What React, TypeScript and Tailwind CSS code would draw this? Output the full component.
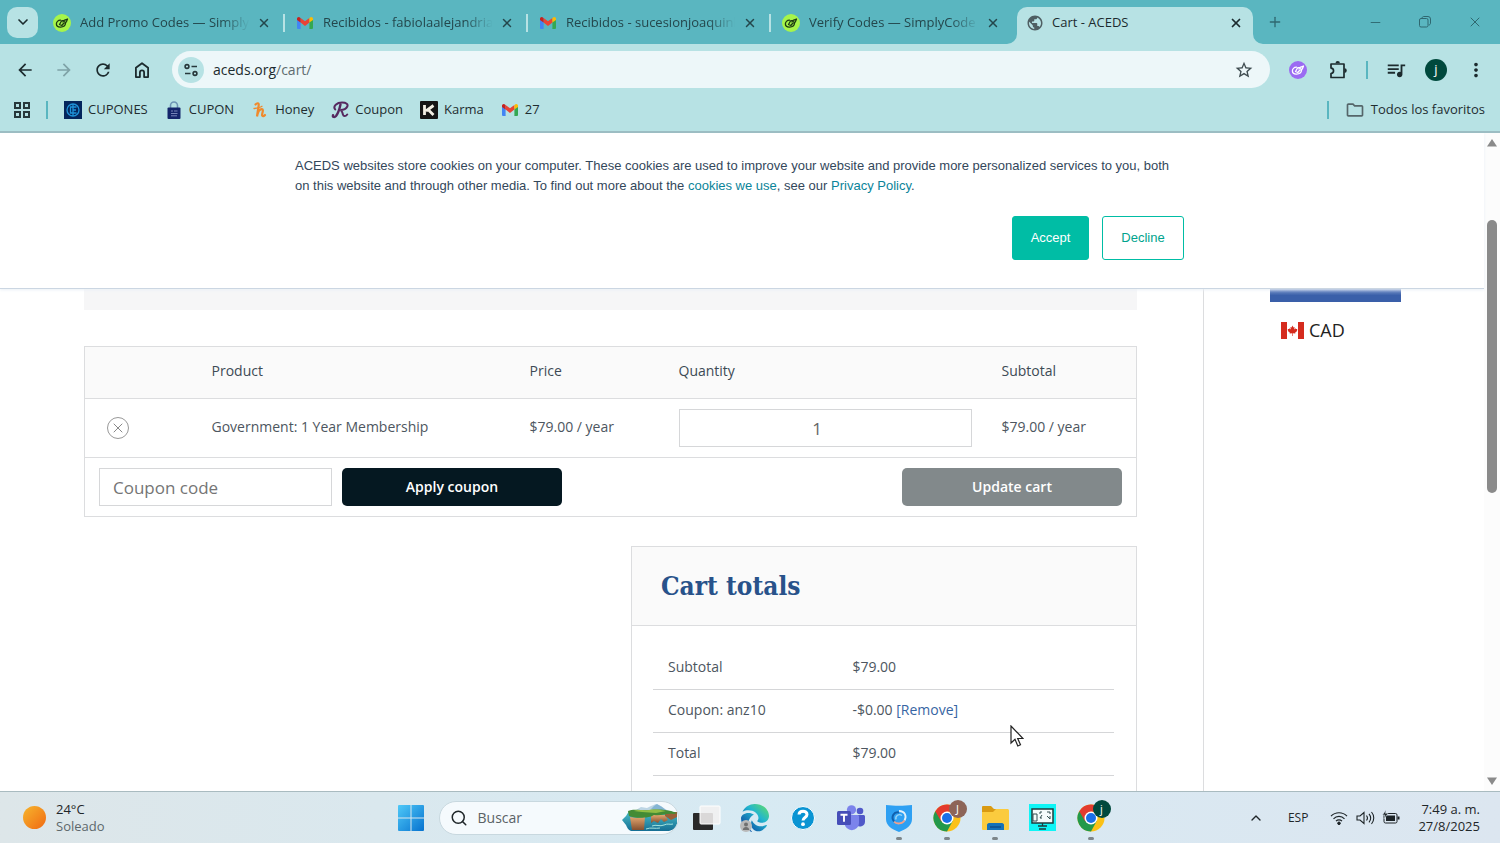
import { useState } from "react";
import type { ReactNode } from "react";
import { ChevronDown, ChevronUp, Minus, Plus, Search, X } from "lucide-react";
import {
  MdArrowBack,
  MdArrowForward,
  MdMoreVert,
  MdOutlineFolder,
  MdPublic,
  MdQueueMusic,
  MdRefresh,
  MdStarBorder,
} from "react-icons/md";
import { FaEdge } from "react-icons/fa6";

/* ---------- Icons ---------- */

function SimplyCodesIcon({ purple = false }: { purple?: boolean }) {
  return (
    <svg viewBox="0 0 18 18" className="w-[18px] h-[18px] shrink-0">
      <circle cx="9" cy="9" r="9" fill={purple ? "#9b6bf2" : "#a6f54a"} />
      <g
        fill="none"
        stroke={purple ? "#fff" : "#1d3a12"}
        strokeWidth="1.3"
        strokeLinecap="round"
        strokeLinejoin="round"
      >
        <path d="M7.500 6.200C5 6.200 3.300 8 3.400 10c.1 2.200 2 3.200 4.200 3.100 2.600-.1 4.800-1.800 5-4.100" />
        <path d="M6.500 10.500l2-3.500 2.500-.7L14.500 5l-1.200 3-2.800 1.500-1.700 2-1.200-.5z" />
        <path d="M10 8l2-1" />
      </g>
    </svg>
  );
}

function GmailIcon() {
  return (
    <svg viewBox="0 0 16 12" className="w-4 h-3 shrink-0">
      <path d="M0 2v9a1 1 0 0 0 1 1h2.600V4.500z" fill="#4285f4" />
      <path d="M16 2v9a1 1 0 0 1-1 1h-2.600V4.500z" fill="#34a853" />
      <path d="M3.600 5.600V1L8 4.300 12.400 1v4.600L8 8.900z" fill="#ea4335" />
      <path d="M0 1.800v1.100l3.600 2.700V1L2.700.4C1.600-.4 0 .4 0 1.800z" fill="#c5221f" />
      <path d="M16 1.800v1.100l-3.600 2.700V1l.9-.6c1.100-.8 2.700 0 2.700 1.400z" fill="#fbbc04" />
    </svg>
  );
}

function HomeIcon() {
  return (
    <svg viewBox="0 0 18 18" className="w-[18px] h-[18px]" fill="none" stroke="currentColor" strokeWidth="1.800">
      <path d="M2.900 16.100V6.800L9 2.200l6.100 4.600v9.300h-4v-4.600a2.100 2.100 0 0 0-4.200 0v4.600z" strokeLinejoin="round" />
    </svg>
  );
}

function PuzzleIcon() {
  return (
    <svg viewBox="0 0 20 20" className="w-5 h-5">
      <path
        d="M3 4h13v13.500H3v-4c3.400-.4 3.400-5 0-5.400z"
        fill="none"
        stroke="currentColor"
        strokeWidth="1.700"
        strokeLinejoin="round"
      />
      <path d="M7.500 3.300a2.200 2.200 0 0 1 4.400 0zM16.500 8.300a2.300 2.300 0 0 1 0 4.600z" fill="currentColor" />
    </svg>
  );
}

function SiteInfoIcon() {
  return (
    <svg viewBox="0 0 16 16" className="w-4 h-4" fill="none" stroke="#27383b" strokeWidth="1.600">
      <circle cx="4" cy="4.500" r="1.900" />
      <path d="M8.500 4.500H14M2 11.500h5.500" />
      <circle cx="12" cy="11.500" r="1.900" />
    </svg>
  );
}

function AppsIcon() {
  return (
    <svg viewBox="0 0 18 18" className="w-[18px] h-[18px]" fill="none" stroke="#27383b" strokeWidth="2">
      <rect x="2" y="2" width="5" height="5" />
      <rect x="11" y="2" width="5" height="5" />
      <rect x="2" y="11" width="5" height="5" />
      <rect x="11" y="11" width="5" height="5" />
    </svg>
  );
}

function CuponesIcon() {
  return (
    <svg viewBox="0 0 18 18" className="w-[18px] h-[18px]" fill="none">
      <rect width="18" height="18" fill="#04265c" />
      <circle cx="9" cy="9" r="6" stroke="#1f93d8" strokeWidth="1.300" />
      <path d="M9 3v12M9 6H6.500v6H9M9 6h3.500M9 9h3M9 12h3.500" stroke="#1f93d8" strokeWidth="1.300" />
    </svg>
  );
}

function LockIcon() {
  return (
    <svg viewBox="0 0 18 18" className="w-[18px] h-[18px]" fill="none">
      <path d="M5.500 7V4.500a3.500 3.500 0 0 1 7 0V7" stroke="#6d94b4" strokeWidth="1.600" />
      <rect x="2.500" y="6.500" width="13" height="11.500" rx="1" fill="#14256b" />
      <path d="M6 10h2M9 10h3.500M6 12.500h6.500M6 14.800h6" stroke="#7684b8" />
    </svg>
  );
}

function HoneyIcon() {
  return (
    <svg viewBox="0 0 18 18" className="w-[18px] h-[18px]" fill="none" stroke="#f08a2c" strokeLinecap="round">
      <path
        d="M4.500 3.500C6 1.700 8 1.800 7.700 4c-.3 3-1 6-1.700 11.500C7 10.500 9 8 11 8.200c2.200.3-.4 4.800.1 6.300.4 1.200 1.900.8 2.900-.5"
        strokeWidth="2.200"
      />
      <path d="M3 7.500c2.500-.3 6-.8 8-2.200" strokeWidth="1.300" />
    </svg>
  );
}

function CouponIcon() {
  return (
    <svg viewBox="0 0 18 18" className="w-[18px] h-[18px]" fill="none" stroke="#56285f" strokeLinecap="round">
      <path d="M9.500 3.500C8.500 8 7.500 12 5 15c-1.500 1.700-3.500 1-3-.8" strokeWidth="2.400" />
      <path
        d="M4.200 8.500C1.500 5 6 1.500 11 1.500c4.500 0 6.300 1.800 5.300 4-1 2.200-4.300 3.500-7 3.500 2 .5 2 2.500 2.600 4.500.6 2 2.600 2.300 4.300 0"
        strokeWidth="2"
      />
    </svg>
  );
}

function KarmaIcon() {
  return (
    <svg viewBox="0 0 18 18" className="w-[18px] h-[18px]">
      <rect width="18" height="18" rx="1" fill="#151515" />
      <path d="M4.500 4v10M13.500 4.500L6 10M8 8.500l5.500 5.500" stroke="#f3efe4" strokeWidth="2.800" fill="none" />
    </svg>
  );
}

function RestoreIcon() {
  return (
    <svg viewBox="0 0 12 12" className="w-3 h-3" fill="none" stroke="currentColor">
      <rect x=".5" y="2.500" width="8.500" height="8.500" rx="1.500" />
      <path d="M3 2.300C3 1.200 3.800.5 4.800.5H9A2.500 2.500 0 0 1 11.500 3v4.200c0 1-.7 1.800-1.800 1.800" />
    </svg>
  );
}

function CanadaFlag() {
  return (
    <svg viewBox="0 0 23 17" className="w-[23px] h-[17px]">
      <rect width="23" height="17" fill="#fff" />
      <path d="M0 0h6v17H0zM17 0h6v17h-6z" fill="#d52b1e" />
      <path
        d="M11.500 3.500l-1 1.900-1.100-.5.400 2.500-1.400-1.200-.3.900-1.500-.2.600 1.500-.6.400 2.300 1.900-.3.900 2.600-.4v2.800h.6v-2.800l2.600.4-.3-.9 2.300-1.900-.6-.4.600-1.500-1.500.2-.3-.9-1.400 1.200.4-2.500-1.100.5z"
        fill="#d52b1e"
      />
    </svg>
  );
}

function WindowsIcon() {
  return (
    <svg viewBox="0 0 26 26" className="w-[26px] h-[26px]">
      <defs>
        <linearGradient id="win" x1="0" y1="0" x2="1" y2="1" gradientUnits="objectBoundingBox">
          <stop offset="0" stopColor="#4fc9f8" />
          <stop offset="1" stopColor="#0672cf" />
        </linearGradient>
      </defs>
      <path d="M1 0h11.500v12.500H0V1a1 1 0 0 1 1-1zM13.500 0H25a1 1 0 0 1 1 1v11.500H13.500zM0 13.500h12.500V26H1a1 1 0 0 1-1-1zM13.500 13.500H26V25a1 1 0 0 1-1 1H13.500z" fill="url(#win)" />
    </svg>
  );
}

function SearchArt() {
  return (
    <svg viewBox="0 0 56 28" className="w-14 h-7">
      <defs>
        <linearGradient id="cliff" x1="0" y1="0" x2="0" y2="1">
          <stop offset="0" stopColor="#e2a66f" />
          <stop offset="1" stopColor="#84502f" />
        </linearGradient>
        <linearGradient id="sea" x1="0" y1="0" x2="0" y2="1">
          <stop offset="0" stopColor="#4bc0c9" />
          <stop offset="1" stopColor="#156e94" />
        </linearGradient>
      </defs>
      <path d="M14 6l5-3 6 1 4-2 5-2 5 2 4 3 4 2-14 2z" fill="#bdd5e4" />
      <path d="M29 5l3-3 3-2 5 3 4 3z" fill="#84b5d3" />
      <path d="M0 16l4-4 3-5h42l6 4v9c-1 4-4 6-8 7H9c-3-1-4-4-5-6z" fill="url(#sea)" />
      <path d="M8 13c4 1 11 1 15 0l-1 13H10z" fill="url(#cliff)" />
      <path d="M29 11h14l3 5-4 2-3-3-3 4-4-2-3 2z" fill="url(#cliff)" />
      <path d="M43 8h12v5l-6 3-6-4z" fill="#9a6038" />
      <path d="M6 7c6-3 14 0 22-1s17 0 21 1l6 2-3 1c-8-1-12 2-20 1-4 3-18 4-25 1z" fill="#448b35" />
      <path d="M12 7c5-2 9 0 15-1s12 0 17 1l-10 2-14-1z" fill="#92be45" />
      <path d="M30 22c4-2 8 1 12-1s6 0 9-1M24 25c5-2 9 0 14-1" stroke="#a4e2dd" fill="none" />
    </svg>
  );
}

function TaskViewIcon() {
  return (
    <svg viewBox="0 0 28 26" className="w-7 h-[26px]">
      <rect x="0" y="8" width="20" height="17" rx="1" fill="#292929" />
      <rect x="7" y="1" width="20" height="18" rx="1" fill="#f2f0f0" fillOpacity=".88" stroke="#fff" />
    </svg>
  );
}

function EdgeIcon() {
  return (
    <span className="relative">
      <svg className="absolute w-0 h-0" aria-hidden="true">
        <defs>
          <linearGradient id="edge" x1="0.900" y1="0.100" x2="0.200" y2="0.900">
            <stop offset="0" stopColor="#55d67c" />
            <stop offset=".4" stopColor="#22b5cf" />
            <stop offset="1" stopColor="#0c4fa4" />
          </linearGradient>
        </defs>
      </svg>
      <FaEdge className="w-7 h-7" fill="url(#edge)" />
      <svg viewBox="0 0 12 12" className="absolute -left-px bottom-0 w-3 h-3">
        <circle cx="6" cy="6" r="6" fill="#b9b9b9" />
        <circle cx="6" cy="4.500" r="2" fill="#707070" />
        <path d="M2.800 10c0-4 6.400-4 6.400 0z" fill="#707070" />
      </svg>
    </span>
  );
}

function HelpIcon() {
  return (
    <svg viewBox="0 0 24 24" className="w-6 h-6" fill="none">
      <circle cx="12" cy="12" r="11.500" fill="#0a94d3" stroke="#fff" />
      <path d="M8 8.500C8.200 4 16 4 16 8.500c0 3-4 3-4 6" stroke="#fff" strokeWidth="3" />
      <circle cx="12" cy="18.200" r="1.900" fill="#fff" />
    </svg>
  );
}

function TeamsIcon() {
  return (
    <svg viewBox="0 0 28 26" className="w-7 h-[26px]">
      <circle cx="23" cy="6" r="3.300" fill="#5059c9" />
      <path d="M18 10h8.500c.8 0 1.500.7 1.500 1.500v5a5 5 0 0 1-9 3z" fill="#5059c9" />
      <circle cx="14.500" cy="4.800" r="4.600" fill="#7b83eb" />
      <path d="M8 10h12.500c.8 0 1.500.7 1.500 1.500V18a7.200 7.200 0 0 1-14.400 0z" fill="#7b83eb" />
      <rect x="0" y="6" width="14" height="14" rx="1.500" fill="#464eb8" />
      <path d="M3.500 9.800h7M7 9.800v7" stroke="#fff" strokeWidth="1.900" />
    </svg>
  );
}

function ShieldIcon() {
  return (
    <svg viewBox="0 0 26 28" className="w-[26px] h-7" fill="none">
      <path d="M0 1c8 1 18 1 26 0v14c0 6-5 10-13 13C5 25 0 21 0 15z" fill="#2ea0f3" />
      <path d="M13 7c6 0 8 5 5.500 9.500" stroke="#e3f1fa" strokeWidth="1.800" />
      <path d="M18.500 16.500c-2 3.500-8 4-10.500 1" stroke="#f0a08c" strokeWidth="1.800" />
      <path d="M8 17.500C4.500 13 8 7.200 13 8.500" stroke="#1160ae" strokeWidth="2" />
      <path d="M10 15.500c-1-4 3-6 6-4" stroke="#9fd6f5" strokeWidth="1.400" />
    </svg>
  );
}

function ChromeIcon({ letter, badge }: { letter: string; badge: string }) {
  return (
    <span className="relative">
      <svg viewBox="0 0 28 28" className="w-7 h-7">
        <circle cx="14" cy="14" r="13.500" fill="#fbc116" />
        <path d="M14 14L2.300 7.200A13.500 13.500 0 0 0 14 27.500l5.600-10.200z" fill="#23994b" />
        <path d="M14 14v-6.300h11.900A13.500 13.500 0 0 0 2.300 7.200l5.900 10.200z" fill="#e33b2e" />
        <circle cx="14" cy="14" r="6.500" fill="#fff" />
        <circle cx="14" cy="14" r="5" fill="#1a6fe8" />
      </svg>
      <span
        className={`absolute -top-1 -right-1.5 flex h-[18px] w-[18px] items-center justify-center rounded-full text-[11px] leading-none text-white ${badge}`}
      >
        {letter}
      </span>
    </span>
  );
}

function ExplorerIcon() {
  return (
    <svg viewBox="0 0 28 26" className="w-7 h-[26px]">
      <path d="M1 2a1 1 0 0 1 1-1h8l3 3h13v5H1z" fill="#d99a12" />
      <path d="M1 7h11l3-3h11.500c.8 0 1.500.7 1.500 1.500V24a1 1 0 0 1-1 1H2a1 1 0 0 1-1-1z" fill="#fbcb3e" />
      <path d="M6 25v-5c0-1 .8-2 2-2h13c1.200 0 2 1 2 2v5z" fill="#1672b8" />
      <path d="M9 22h11" stroke="#0f4f8c" strokeWidth="1.500" />
    </svg>
  );
}

function CaptureIcon() {
  return (
    <svg viewBox="0 0 27 27" className="w-[27px] h-[27px]" fill="none">
      <rect width="27" height="27" fill="#0ff5f6" />
      <rect x="3" y="5" width="21" height="14" fill="#f5fbfb" stroke="#1f3b3d" strokeWidth="1.500" />
      <path d="M4 10h4v7H4zM11 8h2M11 8v2M13 11l-2 3M11 14h2M18 8h3M21 8v2M18 12l3 3M21 12v3" stroke="#334e50" />
      <path d="M13.500 19v3M9 22h9M10 25h7" stroke="#1f3b3d" strokeWidth="1.300" />
    </svg>
  );
}

function TrayIcons() {
  return (
    <svg viewBox="0 0 70 18" className="h-[18px] w-[70px]" fill="none" stroke="#1c2326">
      <path d="M1 7.200a11 11 0 0 1 16 0M3.500 9.800a7.600 7.600 0 0 1 11 0M6 12.200a4.200 4.200 0 0 1 6 0" strokeWidth="1.200" />
      <circle cx="9" cy="14.300" r="1.300" fill="#1c2326" />
      <path d="M27 7h3l4-3.500v11L30 11h-3zM36.500 6.500c1.200 1.500 1.200 3.500 0 5M39 4.800c2 2.500 2 6 0 8.500M41.500 3c3 3.500 3 8.500 0 12" strokeWidth="1.100" />
      <rect x="54" y="4.500" width="13" height="9.500" rx="1.500" />
      <rect x="56" y="6.500" width="9" height="5.500" fill="#1c2326" stroke="none" />
      <path d="M68.500 7.500v3" strokeWidth="2" />
      <path d="M56 1l-3.500 5H55l-1 4 4-5.500h-2.500z" fill="#1c2326" stroke="#dce9f1" strokeWidth=".5" />
    </svg>
  );
}

/* ---------- Browser ---------- */

const tabs = [
  { id: 1, title: "Add Promo Codes — Simply", icon: <SimplyCodesIcon /> },
  { id: 2, title: "Recibidos - fabiolaalejandria", icon: <GmailIcon /> },
  { id: 3, title: "Recibidos - sucesionjoaquinl", icon: <GmailIcon /> },
  { id: 4, title: "Verify Codes — SimplyCode", icon: <SimplyCodesIcon /> },
];

const bookmarks = [
  { name: "CUPONES", icon: <CuponesIcon /> },
  { name: "CUPON", icon: <LockIcon /> },
  { name: "Honey", icon: <HoneyIcon /> },
  { name: "Coupon", icon: <CouponIcon /> },
  { name: "Karma", icon: <KarmaIcon /> },
  { name: "27", icon: <GmailIcon /> },
];

function TabStrip() {
  return (
    <div className="flex h-11 shrink-0 items-center bg-[#5ab6c0] pl-[7px]">
      <button aria-label="Buscar pestañas" className="mr-1 flex h-[31px] w-[31px] items-center justify-center rounded-[10px] bg-[#b7e2e4]">
        <ChevronDown className="h-4 w-4 text-[#1c2b2e]" strokeWidth={2.5} />
      </button>
      {tabs.map((tab) => (
        <div key={tab.id} className="flex w-[243px] items-center pt-0.5 pl-[11px] text-[#24474c]">
          <span className="flex w-[18px] shrink-0 justify-center">{tab.icon}</span>
          <span className="ml-[9px] min-w-0 flex-1 overflow-hidden whitespace-nowrap [mask-image:linear-gradient(to_right,black_82%,transparent_98%)]">
            {tab.title}
          </span>
          <button aria-label="Cerrar pestaña" className="mr-3 ml-1">
            <X className="h-[14px] w-[14px]" strokeWidth={2.5} />
          </button>
          <span className={`h-[18px] w-0.5 ${tab.id === 4 ? "" : "bg-[#b7e2e4]"}`} />
        </div>
      ))}
      <div className="relative ml-[3px] mt-[7px] flex h-[37px] w-[236px] items-center rounded-t-[10px] bg-[#b7e2e4] pb-1.5 pl-[9px] text-[#1c2b2e]">
        <svg viewBox="0 0 10 10" className="absolute bottom-0 -left-2.5 h-2.5 w-2.5">
          <path d="M10 0v10H0A10 10 0 0 0 10 0z" fill="#b7e2e4" />
        </svg>
        <svg viewBox="0 0 10 10" className="absolute -right-2.5 bottom-0 h-2.5 w-2.5">
          <path d="M0 0v10h10A10 10 0 0 1 0 0z" fill="#b7e2e4" />
        </svg>
        <MdPublic className="h-[18px] w-[18px] text-[#4f5f63]" />
        <span className="ml-2 flex-1">Cart - ACEDS</span>
        <button aria-label="Cerrar pestaña" className="mr-[10px]">
          <X className="h-[14px] w-[14px]" strokeWidth={3} />
        </button>
      </div>
      <button aria-label="Nueva pestaña" className="ml-[14px] text-[#2f6870]">
        <Plus className="h-4 w-4" />
      </button>
      <div className="ml-auto flex text-[#2f6870]">
        <button aria-label="Minimizar" className="flex w-[50px] items-center justify-center">
          <Minus className="h-[15px] w-[15px]" strokeWidth={1.5} />
        </button>
        <button aria-label="Restaurar" className="flex w-[50px] items-center justify-center">
          <RestoreIcon />
        </button>
        <button aria-label="Cerrar" className="flex w-[50px] items-center justify-center">
          <X className="h-4 w-4" strokeWidth={1.5} />
        </button>
      </div>
    </div>
  );
}

function ToolButton({ label, children }: { label: string; children: ReactNode }) {
  return (
    <button aria-label={label} className="flex h-7 w-10 shrink-0 items-center justify-center">
      {children}
    </button>
  );
}

function Toolbar() {
  return (
    <div className="flex shrink-0 items-center bg-[#b7e2e4] pt-[7px] pr-1 pl-[11px] text-[#1c2b2e]">
      <div className="flex items-center gap-[11px]">
        <button aria-label="Atrás" className="flex w-7 justify-center"><MdArrowBack className="h-5 w-5" /></button>
        <button aria-label="Adelante" className="flex w-7 justify-center text-[#7fa3a7]"><MdArrowForward className="h-5 w-5" /></button>
        <button aria-label="Recargar" className="flex w-7 justify-center"><MdRefresh className="h-5 w-5" /></button>
        <button aria-label="Inicio" className="flex w-7 justify-center"><HomeIcon /></button>
      </div>
      <div className="ml-4 flex h-[37px] flex-1 items-center rounded-full bg-[#edf7f9] pl-1.5">
        <span className="flex h-[26px] w-[26px] items-center justify-center rounded-full bg-[#b7e2e4]">
          <SiteInfoIcon />
        </span>
        <span className="ml-[9px] flex-1 text-[14px]">
          aceds.org<span className="text-[#5d6b6f]">/cart/</span>
        </span>
        <button aria-label="Agregar a favoritos" className="mr-4 text-[#3f4c50]">
          <MdStarBorder className="h-5 w-5" />
        </button>
      </div>
      <div className="ml-2 flex items-center">
        <ToolButton label="SimplyCodes"><SimplyCodesIcon purple /></ToolButton>
        <ToolButton label="Extensiones"><PuzzleIcon /></ToolButton>
        <span className="mx-2 h-[18px] w-0.5 bg-[#5ab6c0]" />
        <ToolButton label="Control multimedia"><MdQueueMusic className="h-[22px] w-[22px]" /></ToolButton>
        <ToolButton label="Perfil">
          <span className="flex h-[22px] w-[22px] items-center justify-center rounded-full bg-[#00493d] text-[13px] text-white">j</span>
        </ToolButton>
        <ToolButton label="Menú"><MdMoreVert className="h-[22px] w-[22px]" /></ToolButton>
      </div>
    </div>
  );
}

function BookmarksBar() {
  return (
    <div className="flex h-[45px] shrink-0 items-center border-b-2 border-[#9cbdc3] bg-[#b7e2e4] pr-[15px] pl-[13px] text-[#1f2d30]">
      <button aria-label="Aplicaciones"><AppsIcon /></button>
      <span className="mr-4 ml-[15px] h-[18px] w-0.5 bg-[#5ab6c0]" />
      <nav className="flex gap-[17px]">
        {bookmarks.map((item) => (
          <a key={item.name} href="#" className="flex items-center gap-1.5">
            <span className="flex w-[18px] justify-center">{item.icon}</span>
            {item.name}
          </a>
        ))}
      </nav>
      <span className="ml-auto h-[18px] w-0.5 bg-[#5ab6c0]" />
      <a href="#" className="ml-4 flex items-center gap-1.5">
        <MdOutlineFolder className="h-5 w-5 text-[#55666a]" />
        Todos los favoritos
      </a>
    </div>
  );
}

/* ---------- Page ---------- */

function CookieBanner() {
  return (
    <div className="relative border-b border-[#cbd6e2] bg-white pt-[23px] pb-7 font-['Liberation_Sans',Arial,sans-serif] text-[13px] leading-5 text-[#33475b] shadow-[0_1px_3px_#eaf0f6]">
      <div className="mx-auto max-w-[894px] pr-[5px]">
        <p className="max-w-[880px]">
          ACEDS websites store cookies on your computer. These cookies are used to improve your website and provide more personalized services to you, both on this website and through other media. To find out more about the{" "}
          <a href="#" className="text-[#0b8499]">cookies we use</a>, see our{" "}
          <a href="#" className="text-[#0b8499]">Privacy Policy</a>.
        </p>
        <div className="mt-5 flex justify-end gap-[13px]">
          <button className="h-11 w-[77px] rounded-[3px] border border-[#00bda5] bg-[#00bda5] text-white">Accept</button>
          <button className="h-11 w-[82px] rounded-[3px] border border-[#00bda5] text-[#00a38d]">Decline</button>
        </div>
      </div>
    </div>
  );
}

function CartTable() {
  const [quantity, setQuantity] = useState("1");
  const [coupon, setCoupon] = useState("");

  return (
    <table className="mt-9 w-full table-fixed border-collapse border border-[#dcdddf] text-left">
      <thead>
        <tr className="h-[52px] border-b border-[#dcdddf] bg-[#fafafa] text-[#3d4a55]">
          <th className="w-28" aria-label="Eliminar" />
          <th className="px-[15px] pb-1 font-medium">Product</th>
          <th className="w-[149px] px-[15px] pb-1 font-medium">Price</th>
          <th className="w-[323px] px-[15px] pb-1 font-medium">Quantity</th>
          <th className="w-[150px] px-[15px] pb-1 font-medium">Subtotal</th>
        </tr>
      </thead>
      <tbody>
        <tr className="border-b border-[#dcdddf]">
          <td className="px-[22px]">
            <button aria-label="Remove this item" className="flex h-[22px] w-[22px] items-center justify-center rounded-full border border-[#999] text-[#888]">
              <X className="h-4 w-4" strokeWidth={1.5} />
            </button>
          </td>
          <td className="px-[15px] pb-1">Government: 1 Year Membership</td>
          <td className="px-[15px] pb-1">$79.00 / year</td>
          <td className="px-[15px] py-2.5">
            <input
              aria-label="Quantity"
              value={quantity}
              onChange={(e) => setQuantity(e.target.value)}
              className="block h-[38px] w-full border border-[#d6d7d9] pr-4 text-center text-[17px] text-[#666] outline-none"
            />
          </td>
          <td className="px-[15px] pb-1">$79.00 / year</td>
        </tr>
        <tr>
          <td colSpan={5} className="px-[14px] py-2.5">
            <div className="flex">
              <input
                aria-label="Coupon code"
                placeholder="Coupon code"
                value={coupon}
                onChange={(e) => setCoupon(e.target.value)}
                className="h-[38px] w-[233px] border border-[#d6d7d9] px-[13px] text-[17px] outline-none placeholder:text-[#757575]"
              />
              <button className="ml-2.5 h-[38px] w-[220px] rounded-[5px] bg-[#051821] pb-0.5 font-semibold text-white">Apply coupon</button>
              <button className="ml-auto h-[38px] w-[220px] rounded-[5px] bg-[#82898b] pb-0.5 font-semibold text-white">Update cart</button>
            </div>
          </td>
        </tr>
      </tbody>
    </table>
  );
}

function CartTotals() {
  return (
    <section className="mt-[29px] ml-auto h-80 w-[506px] border border-[#dcdddf]">
      <h2 className="flex h-[79px] items-center border-b border-[#dcdddf] bg-[#fafafa] px-[29px] font-['DejaVu_Serif_Condensed','DejaVu_Serif',serif] text-[26px] font-bold text-[#28528a]">
        Cart totals
      </h2>
      <table className="mr-[22px] ml-[21px] mt-5 w-[461px] table-fixed border-collapse text-left">
        <tbody>
          <tr className="h-[43px] border-b border-[#d5d6d8]">
            <th className="w-2/5 px-[15px] pb-0.5 font-normal">Subtotal</th>
            <td className="px-[15px] pb-0.5">$79.00</td>
          </tr>
          <tr className="h-[43px] border-b border-[#d5d6d8]">
            <th className="px-[15px] pb-0.5 font-normal">Coupon: anz10</th>
            <td className="px-[15px] pb-0.5">
              -$0.00 <a href="#" className="text-[#3765a3]">[Remove]</a>
            </td>
          </tr>
          <tr className="h-[43px] border-b border-[#d5d6d8]">
            <th className="px-[15px] pb-0.5 font-normal">Total</th>
            <td className="px-[15px] pb-0.5">$79.00</td>
          </tr>
        </tbody>
      </table>
    </section>
  );
}

function Scrollbar() {
  return (
    <div className="flex w-4 shrink-0 flex-col items-center bg-[#fcfcfc] py-1.5" aria-hidden="true">
      <svg viewBox="0 0 10 8" className="h-2 w-2.5"><path d="M5 0l5 7.500H0z" fill="#8a8a8a" /></svg>
      <div className="mt-[73px] h-[273px] w-2.5 rounded-full bg-[#8a8a8a]" />
      <svg viewBox="0 0 10 8" className="mt-auto h-2 w-2.5"><path d="M5 8L0 .5h10z" fill="#8a8a8a" /></svg>
    </div>
  );
}

function CartPage() {
  return (
    <div className="relative flex min-h-0 flex-1 overflow-hidden bg-white">
      <div className="min-w-0 flex-1">
        <CookieBanner />
        <div className="flex pl-[84px] font-['Open_Sans','Noto_Sans',sans-serif] text-[14px] text-[#4d5660]">
          <main className="min-w-0 flex-1">
            <div className="h-[21px] bg-[#f6f6f7]" />
            <CartTable />
            <CartTotals />
          </main>
          <aside className="ml-[66px] w-[281px] shrink-0 border-l border-[#dcdddf] pl-[66px]">
            <div className="h-[13px] w-[131px] bg-linear-to-b from-[#7b95ca] to-[#3a5fa9] to-50%" />
            <a href="#" className="mt-4 ml-[11px] flex items-center gap-[5px] text-[18px] leading-6 text-[#222]">
              <CanadaFlag />
              CAD
            </a>
          </aside>
        </div>
      </div>
      <Scrollbar />
      {/* Mouse pointer */}
      <svg viewBox="0 0 14 22" className="absolute top-[592px] left-[1010px] h-[22px] w-3.5">
        <path d="M1 1v17l4-3.800L7.800 21l2.700-1.200-2.800-6.300H13z" fill="#fff" stroke="#222" strokeWidth="1.200" />
      </svg>
    </div>
  );
}

/* ---------- Taskbar ---------- */

const apps = [
  { name: "Vista de tareas", icon: <TaskViewIcon />, open: false },
  { name: "Edge", icon: <EdgeIcon />, open: false },
  { name: "Ayuda", icon: <HelpIcon />, open: false },
  { name: "Teams", icon: <TeamsIcon />, open: false },
  { name: "VPN", icon: <ShieldIcon />, open: true },
  { name: "Chrome J", icon: <ChromeIcon letter="J" badge="bg-[#8d6558]" />, open: true },
  { name: "Explorador", icon: <ExplorerIcon />, open: true },
  { name: "Captura", icon: <CaptureIcon />, open: false },
  { name: "Chrome j", icon: <ChromeIcon letter="j" badge="bg-[#00493d]" />, open: true },
];

function Taskbar() {
  return (
    <footer className="flex h-[52px] shrink-0 items-center border-t border-[#a9bbc0] bg-linear-to-r from-[#dde6e9] via-[#d7eaf3] to-[#dce6f0] text-[#1f2629]">
      <div className="flex flex-1 items-center gap-2.5 pl-[23px]">
        <span className="h-[23px] w-[23px] rounded-full bg-linear-to-br from-[#f5b52d] to-[#ef6712]" />
        <div className="leading-[17px]">
          <p>24°C</p>
          <p className="text-[#5d676b]">Soleado</p>
        </div>
      </div>
      <div className="flex items-center">
        <button aria-label="Inicio" className="flex w-12 justify-center"><WindowsIcon /></button>
        <label className="mx-1 flex h-[34px] w-60 items-center overflow-hidden rounded-full border border-[#c8d8df] bg-[#f5fafd] pl-2.5">
          <Search className="h-[18px] w-[18px] shrink-0" />
          <input type="text" aria-label="Buscar" placeholder="Buscar" className="ml-2.5 min-w-0 flex-1 text-[14px] outline-none placeholder:text-[#5a6266]" />
          <SearchArt />
        </label>
        {apps.map((app) => (
          <button key={app.name} aria-label={app.name} className="relative flex h-12 w-12 items-center justify-center">
            {app.icon}
            {app.open && <span className="absolute bottom-0.5 h-[3px] w-1.5 rounded-full bg-[#7d868a]" />}
          </button>
        ))}
      </div>
      <div className="flex flex-1 items-center justify-end pr-5 pl-0.5">
        <button aria-label="Mostrar iconos ocultos"><ChevronUp className="h-4 w-4" /></button>
        <span className="ml-6 text-[12px]">ESP</span>
        <span className="ml-[22px]"><TrayIcons /></span>
        <div className="ml-[18px] text-right leading-[17px]">
          <p>7:49 a. m.</p>
          <p>27/8/2025</p>
        </div>
      </div>
    </footer>
  );
}

export default function App() {
  return (
    <div className="flex h-screen flex-col overflow-hidden font-['Open_Sans','Noto_Sans',sans-serif] text-[13px]">
      <TabStrip />
      <Toolbar />
      <BookmarksBar />
      <CartPage />
      <Taskbar />
    </div>
  );
}
